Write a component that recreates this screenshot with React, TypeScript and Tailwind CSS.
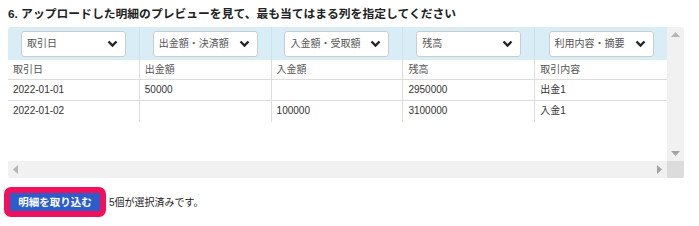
const headers = ["取引日", "出金額・決済額", "入金額・受取額", "残高", "利用内容・摘要"];
const columns = ["取引日", "出金額", "入金額", "残高", "取引内容"];
const rows = [
  ["2022-01-01", "50000", "", "2950000", "出金1"],
  ["2022-01-02", "", "100000", "3100000", "入金1"],
];

function Chevron() {
  return (
    <svg width="11" height="8" viewBox="0 0 11 8" className="shrink-0">
      <path d="M1.5 1.5 L5.5 5.5 L9.5 1.5" fill="none" stroke="#222" strokeWidth="2.3" />
    </svg>
  );
}

export default function App() {
  return (
    <div
      className="w-[699px] h-[226px] bg-white text-[#333]"
      style={{ fontFamily: '"Liberation Sans", "Noto Sans CJK JP", sans-serif' }}
    >
      <h2 className="pl-2 pt-[6px] h-[27px] text-[11.8px] font-bold leading-[16px] text-[#222]">
        6. アップロードした明細のプレビューを見て、最も当てはまる列を指定してください
      </h2>

      <div className="ml-2 w-[676px] h-[151px] flex flex-col rounded-[3px] overflow-hidden bg-[#f1f1f1]">
        <div className="flex flex-1 min-h-0">
          <div className="w-[659px] bg-white flex flex-col">
            {/* Column selects */}
            <div className="grid grid-cols-5 h-[33px] bg-[#d9edf7]">
              {headers.map((h, i) => (
                <div
                  key={h}
                  className={`flex items-center justify-center ${i < 4 ? "border-r border-[#cfe0e8]" : ""}`}
                >
                  <div className="w-[105px] h-[26px] bg-white border border-[#ccc] rounded-[3px] flex items-center justify-between pl-[5px] pr-[7px]">
                    <span className="text-[10px] text-[#555] whitespace-nowrap">{h}</span>
                    <Chevron />
                  </div>
                </div>
              ))}
            </div>

            {/* Preview table */}
            <div className="grid grid-cols-5 h-[20px] border-b border-[#ddd]">
              {columns.map((c, i) => (
                <div
                  key={c}
                  className={`pl-[5px] text-[10px] leading-[20px] text-[#555] ${i < 4 ? "border-r border-[#ddd]" : ""}`}
                >
                  {c}
                </div>
              ))}
            </div>
            {rows.map((r, ri) => (
              <div
                key={ri}
                className={`grid grid-cols-5 h-[21px] ${ri === 0 ? "border-b border-[#ddd]" : ""}`}
              >
                {r.map((v, i) => (
                  <div
                    key={i}
                    className={`pl-[5px] text-[10px] leading-[20px] text-[#333] ${i < 4 ? "border-r border-[#ddd]" : ""}`}
                  >
                    {v}
                  </div>
                ))}
              </div>
            ))}
          </div>

          {/* Vertical scrollbar */}
          <div className="w-[17px] flex flex-col items-center justify-between py-[5px]">
            <svg width="9" height="5" viewBox="0 0 9 5">
              <path d="M0 5 L4.5 0 L9 5 Z" fill="#b5b5b5" />
            </svg>
            <svg width="9" height="5" viewBox="0 0 9 5">
              <path d="M0 0 L4.5 5 L9 0 Z" fill="#a3a3a3" />
            </svg>
          </div>
        </div>

        {/* Horizontal scrollbar */}
        <div className="h-[17px] flex shrink-0">
          <div className="w-[659px] flex items-center justify-between px-[5px]">
            <svg width="5" height="9" viewBox="0 0 5 9">
              <path d="M5 0 L0 4.5 L5 9 Z" fill="#b5b5b5" />
            </svg>
            <svg width="5" height="9" viewBox="0 0 5 9">
              <path d="M0 0 L5 4.5 L0 9 Z" fill="#a3a3a3" />
            </svg>
          </div>
          <div className="w-[17px] bg-[#dcdcdc]" />
        </div>
      </div>

      <div className="mt-[9px] ml-1 flex items-center gap-[3px]">
        <button className="border-[6px] border-[#f20f5c] rounded-[7px] bg-[#f20f5c]">
          <span className="block w-[90px] h-[18px] bg-[#2c5dcb] text-white text-[10.5px] font-bold leading-[18px] text-center">
            明細を取り込む
          </span>
        </button>
        <span className="text-[10px] text-[#222]">5個が選択済みです。</span>
      </div>
    </div>
  );
}
